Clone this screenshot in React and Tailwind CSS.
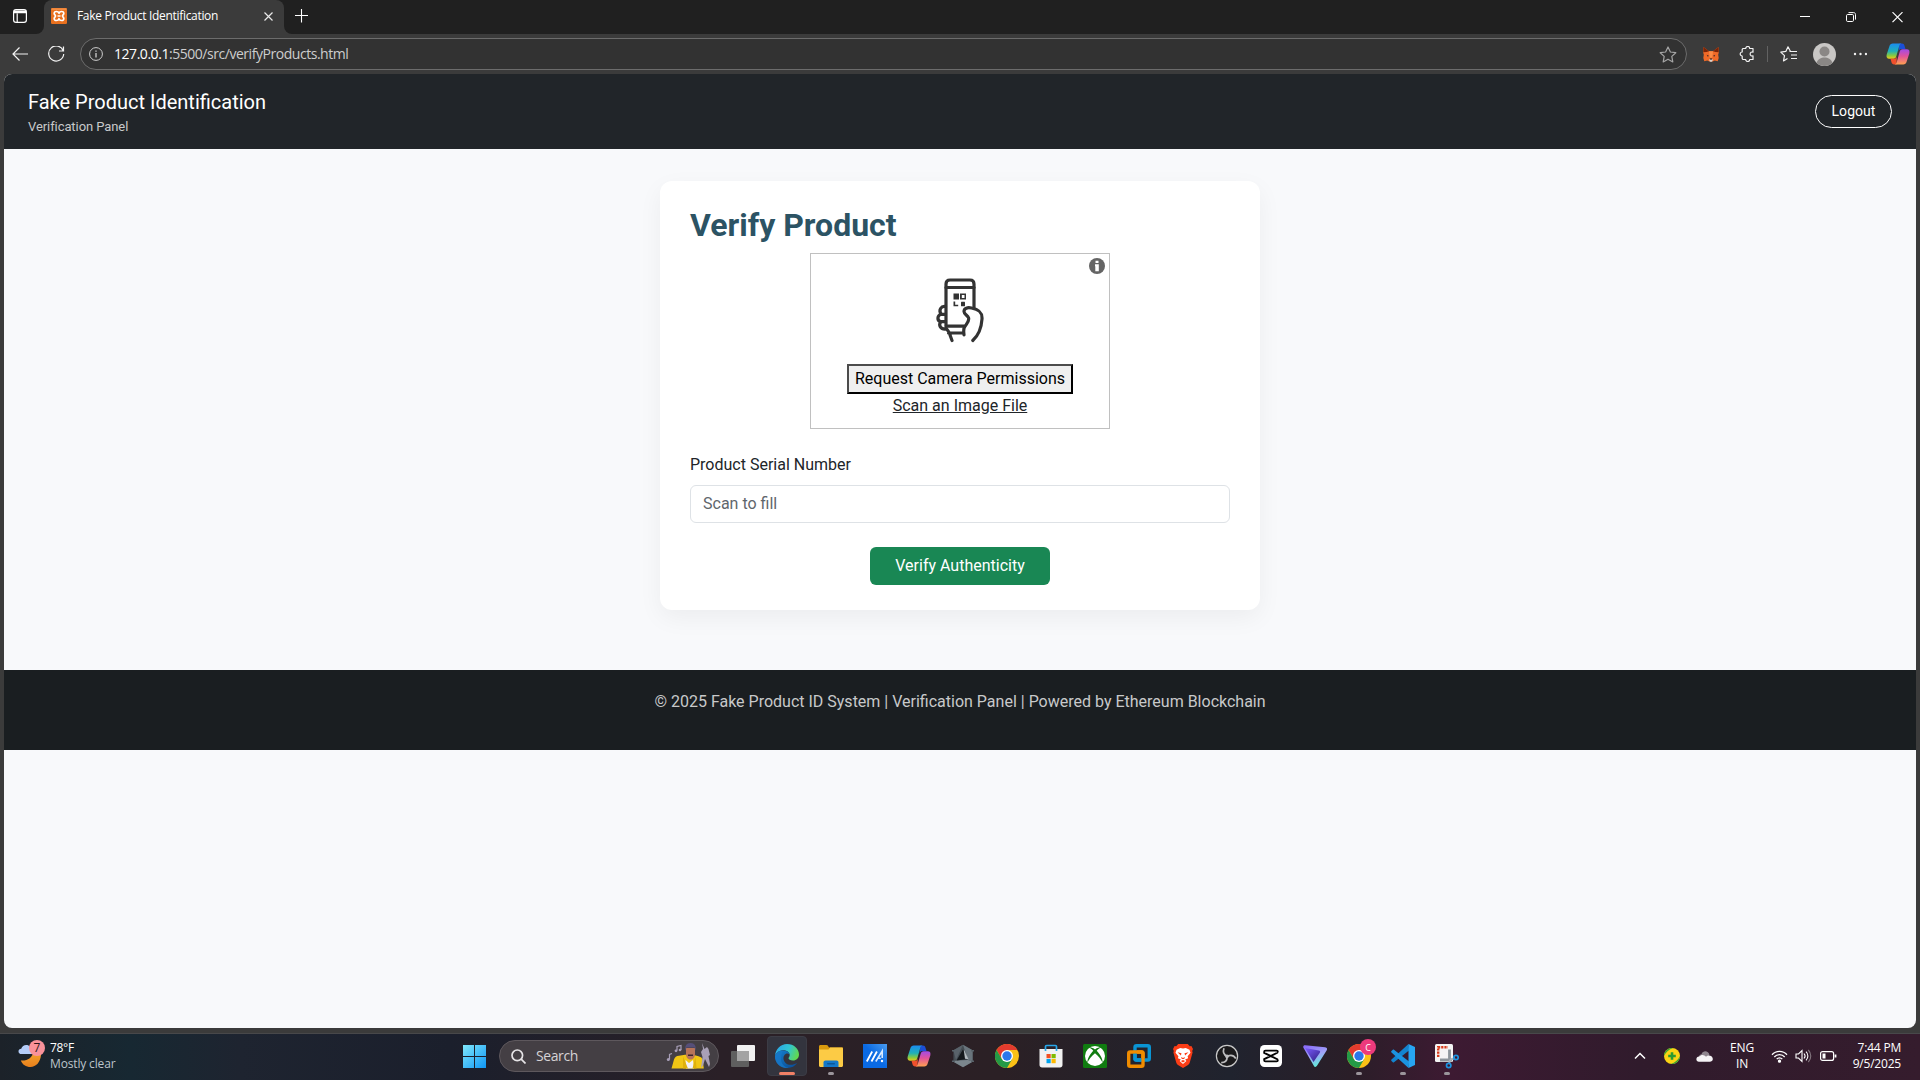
import React from "react";

const ui = "font-['Open_Sans','Noto_Sans',sans-serif]";

/* ---------- Brand icons ---------- */

function Xampp() {
  return (
    <svg width="16" height="16" viewBox="0 0 16 16">
      <rect width="16" height="16" rx="1.2" fill="#e9711f" />
      <rect x="0.5" y="0.5" width="15" height="1.2" fill="#f79a52" />
      <path d="M8 5.300C7.300 3 3.200 2.700 3.200 5.500c0 1.200 1.300 1.500 1.300 2.500s-1.300 1.300-1.300 2.500c0 2.800 4.100 2.500 4.800.2.700 2.300 4.800 2.600 4.800-.2 0-1.200-1.300-1.500-1.300-2.500s1.300-1.300 1.300-2.500C12.800 2.700 8.700 3 8 5.300zM6.500 8h3" fill="none" stroke="#fff" strokeWidth="1.700" strokeLinejoin="round" />
    </svg>
  );
}

function Fox() {
  return (
    <svg width="16" height="15" viewBox="0 0 16 15">
      <path d="M.4 0 6 4.200h4L15.600 0l.2 5.500-.6 2.300.5 3.200-1 3.200-3-.6-2 .9H6.300l-2-.9-3 .6-1-3.200.5-3.200L.2 5.500z" fill="#f06a28" />
      <path d="M.4 0 6 4.200 3.500 5 .3 5.200zM15.600 0 10 4.200l2.500.8 3.200.2z" fill="#7a2408" />
      <path d="M6 4.200h4l-.6 6L8 11l-1.400-.8z" fill="#fa8a45" />
      <path d="M3.800 7.800 6.200 9l-1.800.6zM12.200 7.800 9.800 9l1.800.6z" fill="#3c2a2a" />
      <path d="M6 12.300h4l-.6 1.900-1.400.8-1.400-.8z" fill="#d8d2ce" />
      <path d="M7 11.600h2l.2.900H6.800z" fill="#1b1b1b" />
    </svg>
  );
}

function Copilot({ id }) {
  return (
    <svg width="24" height="22" viewBox="0 0 24 22">
      <defs>
        <linearGradient id={id + "a"} x1="0" y1="0" x2="0" y2="1">
          <stop offset="0" stopColor="#1a8cf0" />
          <stop offset=".5" stopColor="#20b0b8" />
          <stop offset=".8" stopColor="#8ccb3c" />
          <stop offset="1" stopColor="#f4c81c" />
        </linearGradient>
        <linearGradient id={id + "b"} x1="0" y1="0" x2="0" y2="1">
          <stop offset="0" stopColor="#a04be8" />
          <stop offset=".45" stopColor="#e0529c" />
          <stop offset="1" stopColor="#ffa050" />
        </linearGradient>
      </defs>
      <path d="M13.500.5h2.400c1.500 0 2.200.9 2.600 2.200l1 3.300h-4.300c-1.500 0-2.300 1-2.700 2.400z" fill="#1b4fd8" />
      <path d="M6.800.5h8.400c-1.200.4-1.700 1.500-2.100 3L10.400 13c-.5 1.800-1.300 2.800-3 2.800H3.300c-2.300 0-3.300-1.600-2.600-4.200L3.400 3.200C4 1.400 5 .5 6.800.5z" fill={`url(#${id}a)`} />
      <path d="M10.500 21.500H8.100c-1.500 0-2.200-.9-2.600-2.200l-1-3.500h3.400c1.500 0 2.500-1 2.900-2.400z" fill="#f0502c" />
      <path d="M17.200 21.500H8.800c1.200-.4 1.700-1.500 2.100-3L13.600 9c.5-1.800 1.300-2.800 3-2.800h4.100c2.300 0 3.300 1.600 2.600 4.200l-2.700 8.400c-.6 1.800-1.600 2.700-3.400 2.700z" fill={`url(#${id}b)`} />
    </svg>
  );
}

function Edge() {
  return (
    <svg width="26" height="26" viewBox="0 0 26 26">
      <defs>
        <linearGradient id="edgeTop" x1="0" y1=".2" x2="1" y2=".5">
          <stop offset="0" stopColor="#2ba4e8" />
          <stop offset=".55" stopColor="#30c6d2" />
          <stop offset="1" stopColor="#62d84e" />
        </linearGradient>
        <linearGradient id="edgeLow" x1="0" y1="0" x2="1" y2="1">
          <stop offset="0" stopColor="#1480d0" />
          <stop offset="1" stopColor="#0b4a92" />
        </linearGradient>
      </defs>
      <path d="M1 13C1.500 6 6.500 1 13 1c7 0 12 5 12 10.500 0 3.500-2.500 6-6 6-2.800 0-4.500-1-4.500-2.200 0-.9 1.200-1.300 1.200-3.300 0-2.600-2.700-4.800-6.200-4.800C5.500 7.200 2.200 9.500 1 13z" fill="url(#edgeTop)" />
      <path d="M1 13c1.200-3.700 4.500-5.600 8.200-5.600 3.600 0 6.300 2 6.500 4.300-1-1.200-2.700-1.500-4-.8-2.500 1.300-3 5-1 8 2 2.900 6.800 4.300 12.500 1.200C21 23.300 17.500 25 13.500 25 6 25 .8 19.500 1 13z" fill="url(#edgeLow)" />
      <path d="M7 15c-.4 4.800 2.800 9 7.500 9.900C6 26 .8 19.500 1 13c1-3 3.800-5 6.800-5.500C10 7.200 7.300 9.500 7 15z" fill="#1878c8" opacity=".75" />
    </svg>
  );
}

function Folder() {
  return (
    <svg width="24" height="22" viewBox="0 0 24 22">
      <path d="M0 1.500C0 .6.600 0 1.500 0h6c1 0 1.600.8 2.500 2.500H24V8H0z" fill="#d99a0e" />
      <path d="M0 4.500h9.500L11 2.600h11.500c.9 0 1.500.6 1.500 1.500v16.400c0 .9-.6 1.500-1.500 1.500h-21C.6 22 0 21.400 0 20.500z" fill="#fccb45" />
      <path d="M4.500 22v-4.500c0-1.200.8-2 2-2h11c1.200 0 2 .8 2 2V22z" fill="#1478c8" />
      <rect x="8" y="18" width="8" height="1.500" rx=".7" fill="#0c5798" />
    </svg>
  );
}

function MyAsus() {
  return (
    <svg width="24" height="24" viewBox="0 0 24 24">
      <defs>
        <linearGradient id="asus" x1="1" y1="0" x2="0" y2="1">
          <stop offset="0" stopColor="#4a9cf0" />
          <stop offset=".5" stopColor="#0a6ae4" />
        </linearGradient>
      </defs>
      <rect width="24" height="24" fill="url(#asus)" />
      <path d="m3.800 17.500 5.400-10M8.500 17.500l5.400-10" stroke="#fff" strokeWidth="1.800" />
      <path d="M12.800 17.500 19.200 7v7M15 14.200h2.800" fill="none" stroke="#d9eaff" strokeWidth="1.600" />
      <circle cx="19" cy="17" r="1.200" fill="#fff" />
    </svg>
  );
}

function Armoury() {
  return (
    <svg width="22" height="24" viewBox="0 0 22 24">
      <path d="M11 .8 20.600 6.200v11.600L11 23.200 1.400 17.800V6.200z" fill="#454d54" />
      <path d="M11 .8 20.600 6.200v11.600L16 16z" fill="#69747c" />
      <path d="M11 .8 1.400 6.200 4 16z" fill="#59626a" />
      <path d="M1.400 17.800 11 23.200l9.600-5.400L16 16l-12 .6z" fill="#7b868d" />
      <path d="M11.500 4.500 15.500 15 4.500 16.500z" fill="#15191d" />
      <path d="m11.500 4.500 5 10.800-3.500-.6z" fill="#b3bbc0" />
      <path d="M0 6.800h3M19 6.800h3M0 17.200h3M19 17.200h3" stroke="#59636a" strokeWidth="1.600" />
    </svg>
  );
}

function Chrome() {
  return (
    <svg width="24" height="24" viewBox="0 0 24 24">
      <circle cx="12" cy="12" r="12" fill="#fbc116" />
      <path d="M12 6h10.400A12 12 0 0 0 1.600 6l5.200 9z" fill="#e33b2e" />
      <path d="M1.600 6A12 12 0 0 0 12 24l5.200-9-5.200 2.500-5.200-2.500z" fill="#249a46" />
      <circle cx="12" cy="12" r="6" fill="#fff" />
      <circle cx="12" cy="12" r="4.700" fill="#2b77ea" />
    </svg>
  );
}

function Store() {
  return (
    <svg width="24" height="24" viewBox="0 0 24 24">
      <path d="M.5 5h23v16c0 1.500-1 2.500-2.500 2.500H3c-1.500 0-2.500-1-2.500-2.500z" fill="#f1f1f1" />
      <path d="M6.500 7V2.600c0-.6.400-1.100 1.100-1.100h8.800c.7 0 1.100.5 1.100 1.100V7" fill="none" stroke="#28a8ea" strokeWidth="1.700" />
      <path d="M7.500 10h4.200v4.200H7.500z" fill="#f25022" />
      <path d="M12.500 10h4.200v4.200h-4.200z" fill="#7fba00" />
      <path d="M7.500 15h4.200v4.200H7.500z" fill="#00a4ef" />
      <path d="M12.500 15h4.200v4.200h-4.200z" fill="#ffb900" />
    </svg>
  );
}

function Xbox() {
  return (
    <svg width="24" height="24" viewBox="0 0 24 24">
      <rect width="24" height="24" rx="1.500" fill="#107c10" />
      <circle cx="12" cy="12" r="10" fill="#fff" />
      <path d="M5 3.500C8 2.800 10 4 12 5.500 14 4 16 2.800 19 3.500c-1.800 0-4 1.600-5.300 3.200 3.200 3.300 6.200 8 5.800 11.800-1.500-3.500-4.500-6.800-7.500-9.300-3 2.500-6 5.800-7.500 9.300C4.100 14.700 7.100 10 10.300 6.700 9 5.100 6.800 3.500 5 3.500z" fill="#107c10" />
    </svg>
  );
}

function Vmware() {
  return (
    <svg width="24" height="24" viewBox="0 0 24 24" fill="none" strokeWidth="3.400">
      <rect x="8" y="1.700" width="14.300" height="14.300" rx="1.500" stroke="#0a94d4" />
      <rect x="1.700" y="8" width="14.300" height="14.300" rx="1.500" stroke="#f08c00" />
      <path d="M8 9.800V14.500c0 1 .5 1.500 1.500 1.500h4.700" stroke="#0a94d4" />
      <path d="M10 8h4.500c1 0 1.500.5 1.500 1.500V14" stroke="#f08c00" />
    </svg>
  );
}

function Brave() {
  return (
    <svg width="20" height="24" viewBox="0 0 20 24">
      <path d="M5.200 0h9.600l2 2.200 1.600-.2L20 5l-.8 2 .4 1.500-2.900 10.300c-.3 1-.9 1.700-1.700 2.200L10 24l-5-3c-.8-.5-1.400-1.200-1.700-2.200L.4 8.500.8 7 0 5l1.600-3 1.600.2z" fill="#fb3d16" />
      <path d="m10 4.500 2.800-.5 3.700 1.700 1 3-2.900 3.500.5 2-3 1.200 1.300 1.700L10 20l-3.400-2.900 1.300-1.700-3-1.200.5-2-2.900-3.500 1-3L7.200 4z" fill="#fff" />
      <path d="m4.500 8.200 4 1-.6 2.200zM15.500 8.200l-4 1 .6 2.200zM8 13l2 1 2-1-.8 2h-2.400zM7.800 17l2.200-1 2.200 1-2.200 1.600z" fill="#fb3d16" />
    </svg>
  );
}

function Obs() {
  return (
    <svg width="24" height="24" viewBox="0 0 24 24">
      <circle cx="12" cy="12" r="10.600" fill="#1b1a1c" stroke="#c9c9c9" strokeWidth="1.200" />
      <g fill="none" stroke="#bcbcbe" strokeWidth="1.700">
        <path d="M12.200 12.500C9 10.800 7.600 7.800 9 4.200" />
        <path d="M12.200 12.500c3.200-1.700 6.500-1.200 8.600 2" />
        <path d="M12.200 12.500c0 3.700-2.300 6.200-6 6.200" />
      </g>
      <circle cx="12" cy="12.400" r="1.800" fill="#bcbcbe" />
    </svg>
  );
}

function Capcut() {
  return (
    <svg width="22" height="22" viewBox="0 0 22 22">
      <rect width="22" height="22" rx="4.500" fill="#fff" />
      <path d="M17.800 7.500V6.800c0-.8-.4-1.200-1.200-1.200H5.400c-.8 0-1.200.4-1.200 1.200v1l13.600 6.700M17.800 14.500v.7c0 .8-.4 1.200-1.200 1.200H5.400c-.8 0-1.200-.4-1.200-1.200v-1l13.600-6.700" fill="none" stroke="#050505" strokeWidth="1.900" />
    </svg>
  );
}

function Proton() {
  return (
    <svg width="24" height="24" viewBox="0 0 24 24">
      <defs>
        <linearGradient id="pvpn" x1=".2" y1="0" x2=".6" y2="1">
          <stop offset="0" stopColor="#8a6cf9" />
          <stop offset=".5" stopColor="#a0a4f8" />
          <stop offset="1" stopColor="#5bf0d8" />
        </linearGradient>
        <linearGradient id="pvpnIn" x1="0" y1="0" x2=".8" y2="1">
          <stop offset="0" stopColor="#7d5cff" />
          <stop offset="1" stopColor="#35258c" />
        </linearGradient>
      </defs>
      <path d="M.3 3.500C0 2 .8 1 2.300 1.200l19.800 2c1.800.2 2.500 1.600 1.500 3.200L14 21.800c-1 1.500-2.500 1.500-3.200-.1z" fill="url(#pvpn)" />
      <path d="M2 4 15.800 6.500c1.300.2 1.700 1.200 1 2.300L10.500 18z" fill="url(#pvpnIn)" />
    </svg>
  );
}

function VsCode() {
  return (
    <svg width="24" height="24" viewBox="0 0 24 24">
      <path d="m17.500 0 .5 6.500L3 18.300c-.4.300-.9.300-1.200 0L.5 17c-.5-.4-.5-1 0-1.400z" fill="#1384cf" />
      <path d="m17.500 24 .5-6.500L3 5.700c-.4-.3-.9-.3-1.200 0L.5 7c-.5.400-.5 1 0 1.400z" fill="#1b93e0" />
      <path d="M17.500 0 24 3v18l-6.500 3z" fill="#27a5f2" />
    </svg>
  );
}

function Snip() {
  return (
    <svg width="24" height="25" viewBox="0 0 24 25">
      <rect x="0" y="0" width="18" height="18" rx="1.500" fill="#f4f4f4" />
      <path d="M3.200 13V3.200H13" fill="none" stroke="#d83a1c" strokeWidth="2.400" strokeDasharray="2.200 1" />
      <path d="M14.500 5.500v12M5 16h12" stroke="#8d959b" strokeWidth="2.800" />
      <path d="m15 16 5-2M15 16l-1 4" stroke="#aab1b6" strokeWidth="2" />
      <circle cx="21" cy="13.500" r="2.200" fill="none" stroke="#1b93e0" strokeWidth="1.700" />
      <circle cx="13.700" cy="21.500" r="2.200" fill="none" stroke="#1b93e0" strokeWidth="1.700" />
    </svg>
  );
}

function Weather() {
  return (
    <svg width="28" height="28" viewBox="0 0 28 28">
      <defs>
        <linearGradient id="moon" x1="0" y1="0" x2="0" y2="1">
          <stop offset="0" stopColor="#fbb83a" />
          <stop offset="1" stopColor="#e8801c" />
        </linearGradient>
      </defs>
      <path d="M17 3C21 5 23.500 9 23 15c-.5 7-5 12-10.500 12C8 27 4.500 24.800 2.800 20.500c4 .5 14.200 0 14.200-17.500z" fill="url(#moon)" />
      <path d="M3.500 14C1.600 14 .5 12.800.5 11.400c0-1.500 1.100-2.500 2.700-2.600C4 6.300 5.800 5 8.200 5c3.300 0 5.600 2.500 5.800 9z" fill="#b4cdf8" />
      <circle cx="19" cy="8" r="8" fill="#f9929a" />
      <text x="19" y="12.300" fontSize="12" textAnchor="middle" fill="#30181b" fontFamily="Open Sans, sans-serif">7</text>
    </svg>
  );
}

function Singer() {
  return (
    <svg width="46" height="26" viewBox="0 0 46 26">
      <path d="M5.500 25.500 8 16.500c.8-2.500 2.300-3.500 5-3.800l6-1h8l5.500 1.500c3 .8 4 2 4.300 4.500l1 7.800z" fill="#f1c615" />
      <path d="m19.500 17 3.500 3 4-3 1 8.500h-8z" fill="#f3f1f4" />
      <path d="m17 13.500 5 12h-5zM29.500 14l-3 11.500h4z" fill="#e0b10c" />
      <path d="M20 5h9v6c0 3.500-2 5.500-4.500 5.500S20 14.500 20 11z" fill="#b87459" />
      <path d="M19.500 7.500C18.500 3 20.500 0 24.500 0s6 3 5 7.500l-1-3h-8z" fill="#564f79" />
      <path d="M22 11.500h5v1.500h-5z" fill="#3a2630" />
      <path d="M3.500 16.500v-5l2.500-1M11 7.500V3.500l4-1v4.500" fill="none" stroke="#a89fb8" strokeWidth="1.200" />
      <circle cx="2.300" cy="16.500" r="1.500" fill="#a89fb8" /><circle cx="10" cy="7.800" r="1.400" fill="#a89fb8" /><circle cx="14" cy="7" r="1.300" fill="#a89fb8" />
      <path d="m36 0 2.500 6 2.500-2 1.500 2 1.500 6-1.500 1 1.500 8-1 3-4-8-2 6.500-2 2.500 1.500-11-1.500-5 2-3z" fill="#a9a0b6" />
    </svg>
  );
}

function PhoneScan() {
  return (
    <svg width="48" height="66" viewBox="0 0 48 66" fill="none" stroke="#333" strokeWidth="3.200" strokeLinecap="round" strokeLinejoin="round">
      <path d="M10 48V7c0-2.600 1.500-4 4-4h20c2.600 0 4 1.400 4 4v24" />
      <path d="M10 10.500h28M10 49.200h18" />
      <path d="M9.500 29.500c-4.300-.8-7.300 3.700-4.300 7.700-4.200 1.200-4.400 6.400-.4 7.500-2.600 3.600-.3 7.800 5 7.300M5.500 37.300H9M5 44.700h4" />
      <path d="M10 51c1.300 3 3.800 3.500 4 7l2 5.500M12.500 56h15M28 57.800c-.3-4-1-6 1-8.500 2.400-3.500 4.600-5.600 3.500-8.500-1-2.600-4.500-3.600-4.500-6.300 0-3.500 3.500-4.300 7.500-3.500 6.500 1.200 11 3.500 10.500 11-.6 9.500-3.200 16-9.200 21.500" />
      <g stroke="none" fill="#333">
        <rect x="17.500" y="16.500" width="5.500" height="6" />
        <path d="M24 16.500h6v6h-6zm1.800 1.600v2.900H28.500v-2.900z" fillRule="evenodd" />
        <path d="M17.500 24.500h1.700v3.200h3v1.600h-4.700z" />
        <rect x="25" y="24.800" width="4" height="4.500" rx=".5" />
      </g>
    </svg>
  );
}

/* ---------- Browser chrome ---------- */

function TabBar() {
  return (
    <div className={`flex h-[34px] bg-[#202020] text-white ${ui}`}>
      <div className="w-[44px] bg-[#3b3b3b]">
        <div className="flex h-full items-center justify-center rounded-br-[8px] bg-[#202020] pr-1 pb-[2px]">
          <svg width="14" height="14" viewBox="0 0 14 14">
            <rect x=".6" y=".6" width="12.800" height="12.800" rx="2.400" fill="none" stroke="#fff" strokeWidth="1.200" />
            <path d="M1 1.500h12v2.800H1zM3.600 4.500h1.200v8.500H3.600z" fill="#fff" />
          </svg>
        </div>
      </div>
      <div className="flex h-[34px] w-[240px] items-center rounded-t-[8px] bg-[#3b3b3b] pr-[11px] pl-[7px] pb-[2px]">
        <Xampp />
        <span className="ml-[10px] text-[12px] leading-4 tracking-[-0.32px] whitespace-nowrap">Fake Product Identification</span>
        <svg className="mt-px ml-auto" width="9" height="9" viewBox="0 0 9 9" stroke="#e8e8e8" strokeWidth="1.200"><path d="m.5.500 8 8M8.500.500l-8 8" /></svg>
      </div>
      <div className="flex-1 bg-[#3b3b3b]">
        <div className="flex h-full rounded-bl-[8px] bg-[#202020]">
          <svg className="mt-[9px] ml-[10px]" width="15" height="14" viewBox="0 0 15 14" stroke="#fff" strokeWidth="1.100"><path d="M1 6.500h13M7.500 0v13.500" /></svg>
          <div className="mt-[12px] mr-[17px] ml-auto flex gap-[36px]">
            <svg width="10" height="11" viewBox="0 0 10 11"><path d="M0 4.500h10" stroke="#fff" /></svg>
            <svg width="10" height="11" viewBox="0 0 10 11" fill="none" stroke="#fff"><rect x=".5" y="2.500" width="7" height="7" rx="1.200" /><path d="M2.500.600h5c1.300 0 2 .7 2 2v5" /></svg>
            <svg width="11" height="11" viewBox="0 0 11 11" stroke="#fff" strokeWidth="1.200"><path d="m.5.200 10 10M10.500.200l-10 10" /></svg>
          </div>
        </div>
      </div>
    </div>
  );
}

function Toolbar() {
  return (
    <div className={`flex h-[40px] items-center bg-[#3b3b3b] pl-[12px] ${ui}`}>
      <svg className="-mt-px" width="16" height="14" viewBox="0 0 16 14" fill="none" stroke="#f2f2f2" strokeWidth="1.200"><path d="M16 7H1M7.500.500 1 7l6.500 6.500" /></svg>
      <svg className="ml-[20px]" width="17" height="16" viewBox="0 0 17 16" fill="none" stroke="#f2f2f2" strokeWidth="1.200"><path d="M15.300 5A7.500 7.500 0 1 0 15.700 8M15.500.500V5h-4.500" /></svg>
      <div className="ml-[15px] flex h-8 w-[1607px] items-center rounded-full border border-[#6c6c6c] bg-[#323232] pr-[9px] pl-[8px]">
        <svg width="14" height="14" viewBox="0 0 14 14" fill="none" stroke="#cfcfcf"><circle cx="7" cy="7" r="6.400" /><path d="M7 6v4.500M7 3.500v1.300" strokeWidth="1.300" /></svg>
        <span className="ml-[11px] text-[14px] leading-5 tracking-[-0.46px] text-[#cdcdcd]"><span className="text-white">127.0.0.1</span>:5500/src/verifyProducts.html</span>
        <svg className="ml-auto" width="18" height="17" viewBox="0 0 18 17" fill="none" stroke="#a5a5a5" strokeWidth="1.200" strokeLinejoin="round"><path d="m9 1 2.400 5 5.400.7-4 3.700 1 5.500L9 13.200l-4.800 2.700 1-5.500-4-3.700L6.600 6z" /></svg>
      </div>
      <div className="ml-[16px]"><Fox /></div>
      <svg className="ml-[20px]" width="17" height="16" viewBox="0 0 17 16" fill="none" stroke="#f2f2f2" strokeWidth="1.200" strokeLinejoin="round"><path d="M4 2.500h2.700a2 2 0 0 1 4 0H14V6.200a2 2 0 1 0 0 3.600v3.700h-3.300a2 2 0 0 1-4 0H4.500c-.8 0-1.300-.5-1.300-1.300V10a2 2 0 0 1 0-4V3.300z" /></svg>
      <div className="ml-[11px] h-4 w-px bg-[#626262]" />
      <svg className="ml-[12px]" width="17" height="16" viewBox="0 0 17 16" fill="none" stroke="#f2f2f2" strokeWidth="1.200" strokeLinejoin="round"><path d="M9.500 5.500H17M11 9h6M11 12.500h6M10.500 5.500 8 .8 5.800 5.400l-5 .7 3.700 3.500-1 5.300 4-2.400" /></svg>
      <svg className="ml-[16px]" width="23" height="23" viewBox="0 0 23 23"><circle cx="11.500" cy="11.500" r="11.500" fill="#c9c7c5" /><circle cx="11.500" cy="8.500" r="5" fill="#8a8785" /><path d="M3.500 19.700c1.500-3.700 4.500-5.200 8-5.200s6.500 1.500 8 5.200a11.500 11.500 0 0 1-16 0z" fill="#8a8785" /></svg>
      <svg className="ml-[17px]" width="14" height="4" viewBox="0 0 14 4" fill="#f2f2f2"><circle cx="2" cy="2" r="1.200" /><circle cx="7.500" cy="2" r="1.200" /><circle cx="13" cy="2" r="1.200" /></svg>
      <div className="ml-[19px]"><Copilot id="tb" /></div>
    </div>
  );
}

/* ---------- Web page ---------- */

function Page() {
  return (
    <div className="mx-[4px] flex h-[954px] flex-col overflow-hidden rounded-[8px] bg-[#f8f9fb] font-[Roboto,sans-serif] text-[16px] leading-6 text-[#212529]">
      <header className="flex h-[75px] shrink-0 items-center justify-between bg-[#212529] px-6">
        <div className="pt-[4px]">
          <div className="text-[20px] leading-6 text-white">Fake Product Identification</div>
          <div className="mt-[3px] text-[13px] leading-5 tracking-[-0.08px] text-[#c8c9ca]">Verification Panel</div>
        </div>
        <button className="h-[33px] w-[77px] rounded-full border border-white pb-[2px] text-[14px] tracking-[0.06px] text-white">Logout</button>
      </header>
      <main className="flex h-[521px] shrink-0 justify-center pt-[32px]">
        <section className="flex h-[429px] w-[600px] flex-col items-center rounded-[12px] bg-white px-[30px] pt-[24px] shadow-[0_8px_24px_rgba(0,0,0,0.05)]">
          <h1 className="h-[48px] self-start text-[32px] leading-[40px] font-bold text-[#2c5364]">Verify Product</h1>
          <div className="relative flex h-[176px] w-[300px] flex-col items-center border border-[#c0c0c0] pt-[23px]">
            <svg className="absolute top-[4px] right-[4px]" width="16" height="16" viewBox="0 0 16 16"><circle cx="8" cy="8" r="8" fill="#646464" /><path d="M6.500 2.800h3V5h-3zM6 6.300h3.800v7H6.300v-5H6z" fill="#fff" /></svg>
            <PhoneScan />
            <button className="mt-[21px] h-[30px] w-[226px] border-2 border-t-[#4c4c4c] border-r-black border-b-black border-l-[#4c4c4c] bg-[#efefef] text-[16px] leading-6 whitespace-nowrap text-black">Request Camera Permissions</button>
            <span className="underline">Scan an Image File</span>
          </div>
          <label className="mt-[24px] self-start">Product Serial Number</label>
          <input className="mt-[8px] h-[38px] w-full rounded-[6px] border border-[#dee2e6] px-3 pb-[2px] placeholder:text-[#5f666c]" placeholder="Scan to fill" />
          <button className="mt-[24px] h-[38px] w-[180px] rounded-[6px] bg-[#198754] text-white">Verify Authenticity</button>
        </section>
      </main>
      <footer className="h-[80px] shrink-0 bg-[#1a1e21] pt-[20px] text-center text-[#c8c9ca]">© 2025 Fake Product ID System | Verification Panel | Powered by Ethereum Blockchain</footer>
    </div>
  );
}

/* ---------- Taskbar ---------- */

const apps = [
  { id: "edge", icon: <Edge />, active: true },
  { id: "files", icon: <Folder />, open: true },
  { id: "myasus", icon: <MyAsus /> },
  { id: "copilot", icon: <Copilot id="tk" /> },
  { id: "armoury", icon: <Armoury /> },
  { id: "chrome", icon: <Chrome /> },
  { id: "store", icon: <Store /> },
  { id: "xbox", icon: <Xbox /> },
  { id: "vmware", icon: <Vmware /> },
  { id: "brave", icon: <Brave /> },
  { id: "obs", icon: <Obs /> },
  { id: "capcut", icon: <Capcut /> },
  { id: "proton", icon: <Proton /> },
  { id: "chrome-c", icon: <Chrome />, open: true, badge: "C" },
  { id: "vscode", icon: <VsCode />, open: true },
  { id: "snip", icon: <Snip />, open: true },
];

function Taskbar() {
  return (
    <div className={`flex h-[47px] items-center border-t border-[#48484a] bg-[linear-gradient(90deg,#1c2229_0px,#172832_130px,#1e2430_240px,#1b1f2c_450px,#2a2027_720px,#2b2025_1000px,#20232e_1230px,#2a1e28_1350px,#3d1a32_1450px,#301b2c_1640px,#351c2d_1920px)] pb-[2px] text-[12px] leading-4 text-white ${ui}`}>
      <div className="flex w-[463px] items-center pl-[18px]">
        <div className="-mt-[5px]"><Weather /></div>
        <div className="ml-[4px] whitespace-nowrap">
          <div className="tracking-[-0.3px]">78°F</div>
          <div className="tracking-[-0.15px] text-[#bcc4ca]">Mostly clear</div>
        </div>
      </div>
      <svg width="23" height="23" viewBox="0 0 23 23">
        <defs><linearGradient id="win" x1="0" y1="0" x2="1" y2="1"><stop offset="0" stopColor="#7fe8fc" /><stop offset="1" stopColor="#0f96f5" /></linearGradient></defs>
        <path d="M0 0h11v11H0zM12 0h11v11H12zM0 12h11v11H0zM12 12h11v11H12z" fill="url(#win)" />
      </svg>
      <div className="ml-[13px] flex h-8 w-[220px] items-center rounded-full border border-[#5e585d] bg-[#443f44] pr-[6px] pl-[11px]">
        <svg width="15" height="15" viewBox="0 0 15 15" fill="none" stroke="#e6e4e6" strokeWidth="1.700"><circle cx="6.300" cy="6.300" r="5.300" /><path d="m10.200 10.200 4.300 4.300" /></svg>
        <span className="ml-[10px] text-[14px] tracking-[-0.4px] text-[#d6d3d6]">Search</span>
        <div className="ml-auto"><Singer /></div>
      </div>
      <svg className="ml-[12px]" width="24" height="22" viewBox="0 0 24 22">
        <rect x="6" y="0" width="18" height="16" rx="1" fill="#f1f1f1" />
        <rect x="0" y="6" width="18" height="16" rx="1" fill="#5f5f5f" />
        <path d="M6 6h12v10H6z" fill="#a3a3a3" />
      </svg>
      <div className="ml-[10px] flex">
        {apps.map((app) => (
          <div key={app.id} className="relative flex h-[44px] w-[44px] items-center justify-center">
            {app.active && <div className="absolute top-[2px] left-[2px] h-[40px] w-[40px] rounded-[4px] border border-[#3c3c45] bg-[#33343e]" />}
            <div className="relative">{app.icon}</div>
            {app.active && <div className="absolute bottom-[3px] left-[14px] h-[3px] w-[16px] rounded-full bg-[#f28066]" />}
            {app.open && <div className="absolute bottom-[3px] left-[19px] h-[3px] w-[6px] rounded-full bg-[#9b959b]" />}
            {app.badge && <div className="absolute top-[5px] left-[23px] flex h-[16px] w-[16px] items-center justify-center rounded-full bg-[#ec3a7c] text-[9px] leading-none">{app.badge}</div>}
          </div>
        ))}
      </div>
      <div className="ml-auto flex items-center pr-[19px]">
        <svg width="12" height="8" viewBox="0 0 12 8" fill="none" stroke="#fff" strokeWidth="1.500"><path d="m1 6.500 5-5 5 5" /></svg>
        <svg className="ml-[18px]" width="16" height="16" viewBox="0 0 16 16"><circle cx="8" cy="8" r="8" fill="#fbd414" /><path d="M0 8a8 8 0 0 1 9-8C5 1.500 2 4 0 8zM16 8a8 8 0 0 1-9 8c4-1.500 7-4 9-8z" fill="#35a536" /><path d="M8 4.200v7.600M4.200 8h7.600" stroke="#2b9a30" strokeWidth="2.600" /></svg>
        <svg className="ml-[16px]" width="17" height="11" viewBox="0 0 17 11"><path d="M4 8.500C1 7 3.500 3.300 5.500 3.200 7-1 12.500-.5 13.500 4L9 8z" fill="#8f858e" /><path d="M3 10.800c-3.500-.5-3.600-5 .3-5.200 2-2.500 5-2 6.700.2C12 3.500 16.300 4.300 16.800 7.700c.2 2-1.300 3.100-3 3.100z" fill="#f5f3f5" /></svg>
        <div className="ml-[16px] w-[26px] text-center tracking-[-0.2px]"><div>ENG</div><div>IN</div></div>
        <svg className="ml-[16px]" width="17" height="13" viewBox="0 0 17 13" fill="none" stroke="#fff" strokeWidth="1.300"><path d="M1 4.700C5 .2 12 .2 16 4.700M3.300 7c2.700-3.200 7.700-3.200 10.400 0M5.700 9.200c1.500-1.800 4.100-1.800 5.600 0" /><circle cx="8.500" cy="11.200" r="1" fill="#fff" /></svg>
        <svg className="ml-[7px]" width="17" height="14" viewBox="0 0 17 14" fill="none" stroke="#fff" strokeWidth="1.100"><path d="M1 5v4h2.500L7 12.500v-11L3.500 5zM9 4.500c1.300 1.500 1.300 3.500 0 5M11 2.700c2.500 2.500 2.500 6.100 0 8.600" /><path d="M13.300 1c3.300 3.500 3.300 8.500 0 12" stroke="#83767f" /></svg>
        <svg className="ml-[8px]" width="17" height="10" viewBox="0 0 17 10" fill="none" stroke="#fff" strokeWidth="1.200"><rect x=".6" y=".6" width="13" height="8.800" rx="2" /><path d="M2.500 2.500h3v5h-3z" fill="#fff" stroke="none" /><path d="M15.500 3.500v3" strokeWidth="1.800" /></svg>
        <div className="ml-[15px] w-[49px] text-right tracking-[-0.2px] whitespace-nowrap"><div>7:44 PM</div><div>9/5/2025</div></div>
      </div>
    </div>
  );
}

export default function App() {
  return (
    <div className="flex h-[1080px] w-[1920px] flex-col overflow-hidden bg-[#3b3b3b]">
      <TabBar />
      <Toolbar />
      <Page />
      <div className="h-[5px] shrink-0" />
      <Taskbar />
    </div>
  );
}
